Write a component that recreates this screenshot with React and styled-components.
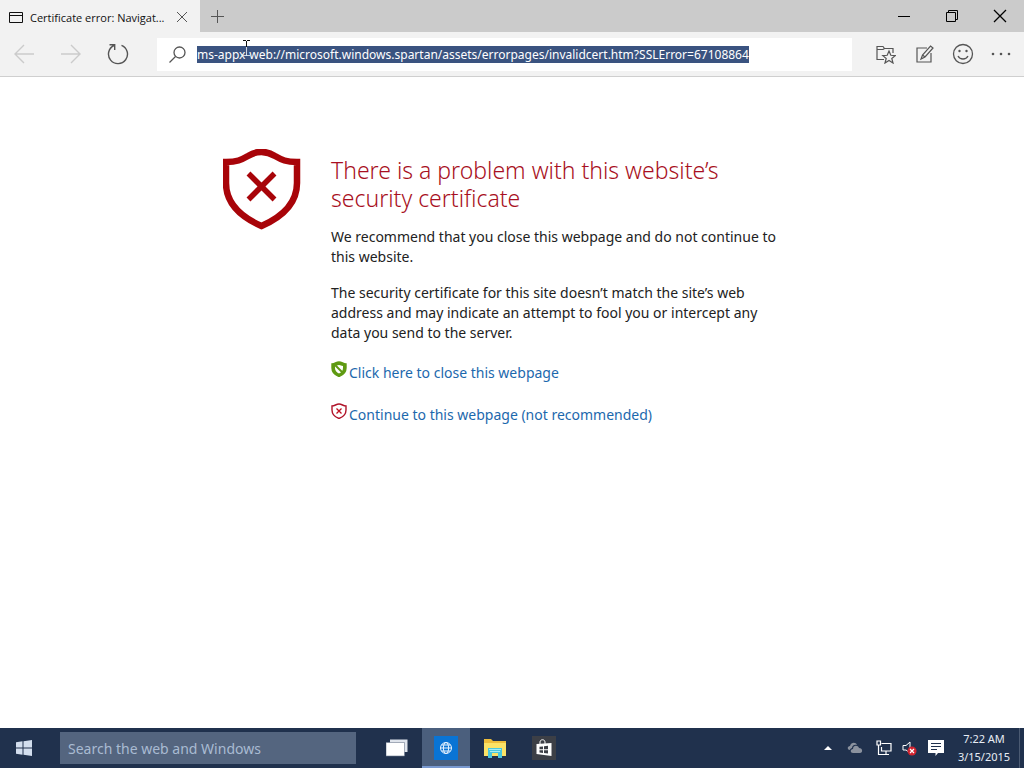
import React, { useEffect, useRef } from "react";
import styled, { createGlobalStyle } from "styled-components";

const Global = createGlobalStyle`
  * { box-sizing: border-box; }
  body { margin: 0; background: #fff; font-family: "Noto Sans", "Open Sans", sans-serif; }
  button { border: 0; padding: 0; background: none; font: inherit; color: inherit; }
  svg { display: block; flex: none; }
`;

const Desktop = styled.div`
  min-height: 100vh;
  display: flex;
  flex-direction: column;
`;

const TitleBar = styled.header`
  display: flex;
  height: 32px;
  background: #cbcbcb;
`;
const Tab = styled.div`
  width: 200px;
  flex: none;
  display: flex;
  align-items: center;
  padding: 2px 10px 0 8px;
  background: #f2f2f2;
  color: #111;
`;
const TabTitle = styled.span`
  flex: 1;
  margin-left: 7px;
  white-space: nowrap;
  font-family: "Open Sans", "Noto Sans", sans-serif;
  font-size: 11px;
`;
const IconButton = styled.button`
  flex: none;
  display: grid;
  place-items: center;
  width: ${(p) => p.$w}px;
  height: ${(p) => p.$h}px;
  color: ${(p) => p.$color || "#555"};
`;
const Spacer = styled.div`
  flex: 1;
`;

const Toolbar = styled.nav`
  display: flex;
  align-items: center;
  height: 45px;
  background: #f2f2f2;
  border-bottom: 1px solid #cfcfcf;
  padding-right: 4px;
`;
const AddressBar = styled.label`
  position: relative;
  flex: 1;
  min-width: 0;
  display: flex;
  align-items: center;
  height: 33px;
  margin: 0 15px 0 16px;
  padding-left: 12px;
  background: #fff;
  color: #555;
`;
const AddressInput = styled.input`
  flex: 1;
  min-width: 0;
  margin-left: 11px;
  padding: 0;
  border: 0;
  outline: 0;
  background: none;
  color: #111;
  caret-color: transparent;
  font-family: inherit;
  font-size: 12px;
  line-height: 17px;
  &::selection { background: #3a5380; color: #fff; }
`;
const TextCursor = styled.svg`
  position: absolute;
  left: 85px;
  top: 2px;
`;

const Page = styled.main`
  flex: 1;
  padding: 72px 24px 40px;
`;
const Notice = styled.section`
  display: flex;
  gap: 30px;
  max-width: 578px;
  margin: 0 auto;
`;
const Message = styled.div`
  padding-top: 7px;
  color: #222;
  font-size: 14px;
  line-height: 20px;
  white-space: nowrap;
`;
const Heading = styled.h1`
  margin: 0 0 15px;
  color: #a80f22;
  font-weight: 300;
  font-size: 23px;
  line-height: 28px;
`;
const Paragraph = styled.p`
  margin: 0 0 16px;
`;
const Action = styled.a`
  display: flex;
  align-items: flex-start;
  gap: 2px;
  width: max-content;
  margin-top: ${(p) => p.$gap}px;
  color: #1c68ad;
  text-decoration: none;
`;
const ActionIcon = styled.svg`
  margin-top: -2px;
`;

const Taskbar = styled.footer`
  display: flex;
  align-items: center;
  height: 40px;
  background: #20314d;
  color: #e8edf5;
`;
const TaskSearch = styled.input`
  width: 296px;
  height: 32px;
  margin: 0 17px 0 12px;
  padding: 0 8px;
  border: 0;
  outline: 0;
  background: #54657f;
  font-family: inherit;
  font-size: 14px;
  color: #fff;
  &::placeholder { color: #a9bbd2; opacity: 1; }
`;
const TaskButton = styled.button`
  flex: none;
  display: grid;
  place-items: center;
  width: 48px;
  height: 40px;
  margin-right: 1px;
  background: ${(p) => (p.$active ? "#4b5f7d" : "none")};
  box-shadow: ${(p) => (p.$active ? "inset 0 -2px #7898cf" : "none")};
`;
const Clock = styled.time`
  width: 62px;
  margin-left: 2px;
  text-align: center;
  font-size: 11px;
  line-height: 18px;
  white-space: nowrap;
`;
const ShowDesktop = styled.button`
  width: 5px;
  height: 40px;
  margin-left: 4px;
  border-left: 1px solid #4b5a72;
`;

const URL_TEXT =
  "ms-appx-web://microsoft.windows.spartan/assets/errorpages/invalidcert.htm?SSLError=67108864";

const Stroke = ({ w, h, sw = 1, children }) => (
  <svg width={w} height={h} viewBox={`0 0 ${w} ${h}`} fill="none" stroke="currentColor" strokeWidth={sw} aria-hidden="true">
    {children}
  </svg>
);

const WarningShield = () => (
  <svg width="78" height="82" viewBox="0 0 78 82" fill="none" stroke="#a80409" aria-hidden="true">
    <path d="M3 13C14 13 18 11 25 7C34 1.500 43 1.500 52 7C59 11 63 13 74 13V34C74 54 59 68 38.500 77C18 68 3 54 3 34Z" strokeWidth="6.500" />
    <path d="M25.500 24.500L51.500 50.500M51.500 24.500L25.500 50.500" strokeWidth="5.500" />
  </svg>
);

const SmallShield = ({ safe }) => (
  <ActionIcon width="16" height="16" viewBox="0 0 16 16" aria-hidden="true">
    <path
      d="M1 3C4 3 5 1 8 1S12 3 15 3V7C15 11 12 14 8 15.500C4 14 1 11 1 7Z"
      fill={safe ? "#5f9a12" : "#fff"}
      stroke={safe ? "#5f9a12" : "#b0142a"}
      strokeWidth="1.400"
    />
    {safe ? (
      <>
        <path d="M4 5C6 5 6 4 8 4S10 5 12 5V7C12 10 10 11.500 8 12.500C6 11.500 4 10 4 7Z" fill="#fff" />
        <path d="M4 4L12 12" stroke="#5f9a12" strokeWidth="2" />
      </>
    ) : (
      <path d="M5.500 5.500L10.500 10.500M10.500 5.500L5.500 10.500" stroke="#c01020" strokeWidth="1.300" />
    )}
  </ActionIcon>
);

export default function App() {
  const address = useRef(null);
  useEffect(() => {
    address.current.focus();
    address.current.select();
    address.current.scrollLeft = 0;
  }, []);

  return (
    <Desktop>
      <Global />
      <TitleBar>
        <Tab>
          <Stroke w={15} h={13}><path d="M1.500 1.500H14.500V11.500H1.500ZM1.500 4.500H14.500" /></Stroke>
          <TabTitle>Certificate error: Navigat...</TabTitle>
          <IconButton $w={16} $h={16} aria-label="Close tab">
            <Stroke w={12} h={12}><path d="M1 1L11 11M11 1L1 11" /></Stroke>
          </IconButton>
        </Tab>
        <IconButton $w={34} $h={32} aria-label="New tab">
          <Stroke w={13} h={13}><path d="M6.500 0V13M0 6.500H13" /></Stroke>
        </IconButton>
        <Spacer />
        <IconButton $w={48} $h={32} $color="#000" aria-label="Minimize">
          <Stroke w={12} h={12}><path d="M0 6.500H12" /></Stroke>
        </IconButton>
        <IconButton $w={48} $h={32} $color="#000" aria-label="Restore">
          <Stroke w={12} h={12}><path d="M.5 2.500H9.500V11.500H.5ZM2.500 2.500V.5H11.500V9.500H9.500" /></Stroke>
        </IconButton>
        <IconButton $w={48} $h={32} $color="#000" aria-label="Close">
          <Stroke w={14} h={14} sw={1.3}><path d="M1 1L13 13M13 1L1 13" /></Stroke>
        </IconButton>
      </TitleBar>

      <Toolbar>
        <IconButton $w={47} $h={44} $color="#cbcbcb" aria-label="Back">
          <Stroke w={20} h={20} sw={1.4}><path d="M20 10H1M10 1L1 10L10 19" /></Stroke>
        </IconButton>
        <IconButton $w={47} $h={44} $color="#cbcbcb" aria-label="Forward">
          <Stroke w={20} h={20} sw={1.4}><path d="M0 10H19M10 1L19 10L10 19" /></Stroke>
        </IconButton>
        <IconButton $w={47} $h={44} aria-label="Refresh">
          <Stroke w={22} h={22} sw={1.4}><path d="M14.500 2.300A9.500 9.500 0 1 1 7 2.500M2.500 1.700H7.700V7" /></Stroke>
        </IconButton>
        <AddressBar>
          <Stroke w={17} h={17} sw={1.3}><circle cx="10.500" cy="6.500" r="5.500" /><path d="M6.500 10.500L.5 16.500" /></Stroke>
          <AddressInput ref={address} defaultValue={URL_TEXT} aria-label="Address" spellCheck={false} />
          <TextCursor width="9" height="16" viewBox="0 0 9 16" fill="none" aria-hidden="true">
            <path d="M1 .5H4M5 .5H8M4.500 1V7" stroke="#111" />
            <path d="M4.500 7V15M1 15.500H4M5 15.500H8" stroke="#cfd8e4" />
          </TextCursor>
        </AddressBar>
        <IconButton $w={38} $h={44} aria-label="Favorites">
          <Stroke w={20} h={19} sw={1.2}>
            <path d="M8 14.500H1V1.500H7L8.500 3.500H17V8M1 4.500H7L8.500 3.500" />
            <path d="M13 6L14.800 10.300L19.200 10.600L15.800 13.500L17 18L13 15.500L9 18L10.200 13.500L6.800 10.600L11.200 10.300Z" fill="#f2f2f2" />
          </Stroke>
        </IconButton>
        <IconButton $w={39} $h={44} aria-label="Make a web note">
          <Stroke w={18} h={18} sw={1.2}>
            <path d="M11 3H1V17H15V8" />
            <path d="M14.500 1L17 3L9 12L5 14L6.500 10ZM6.500 10L9 12" />
          </Stroke>
        </IconButton>
        <IconButton $w={38} $h={44} aria-label="Send feedback">
          <Stroke w={22} h={22} sw={1.3}>
            <circle cx="11" cy="11" r="9.500" />
            <path d="M6 13C8 17 14 17 16 13" />
            <circle cx="7.500" cy="8" r="1.200" fill="currentColor" stroke="none" />
            <circle cx="14.500" cy="8" r="1.200" fill="currentColor" stroke="none" />
          </Stroke>
        </IconButton>
        <IconButton $w={38} $h={44} aria-label="More">
          <svg width="20" height="4" viewBox="0 0 20 4" fill="currentColor"><circle cx="2" cy="2" r="1.300" /><circle cx="10" cy="2" r="1.300" /><circle cx="18" cy="2" r="1.300" /></svg>
        </IconButton>
      </Toolbar>

      <Page>
        <Notice>
          <WarningShield />
          <Message>
            <Heading>There is a problem with this website’s<br />security certificate</Heading>
            <Paragraph>We recommend that you close this webpage and do not continue to<br />this website.</Paragraph>
            <Paragraph>The security certificate for this site doesn’t match the site’s web<br />address and may indicate an attempt to fool you or intercept any<br />data you send to the server.</Paragraph>
            <Action href="#close" $gap={20}><SmallShield safe />Click here to close this webpage</Action>
            <Action href="#continue" $gap={22}><SmallShield />Continue to this webpage (not recommended)</Action>
          </Message>
        </Notice>
      </Page>

      <Taskbar>
        <IconButton $w={48} $h={40} $color="#d3deee" aria-label="Start">
          <svg width="16" height="16" viewBox="0 0 16 16" fill="currentColor"><path d="M0 2.300L6.500 1.300V7.500H0ZM7.500 1.200L16 0V7.500H7.500ZM0 8.500H6.500V14.700L0 13.700ZM7.500 8.500H16V16L7.500 14.800Z" /></svg>
        </IconButton>
        <TaskSearch aria-label="Search" placeholder="Search the web and Windows" />
        <TaskButton aria-label="Task view">
          <svg width="22" height="18" viewBox="0 0 22 18"><path d="M4 .5H21.500V13H4Z" fill="#dfe4ec" /><path d="M0 3.500H18.500V17H0Z" fill="#fff" stroke="#6d7a8f" strokeWidth=".6" /></svg>
        </TaskButton>
        <TaskButton $active aria-label="Browser">
          <svg width="24" height="24" viewBox="0 0 24 24" fill="none" stroke="#e9f4ff" strokeWidth="1"><path d="M0 0H24V24H0Z" fill="#0a74d4" stroke="none" /><circle cx="12" cy="12" r="5.500" /><ellipse cx="12" cy="12" rx="2.600" ry="5.500" /><path d="M6.500 12H17.500M7.500 9H16.500M7.500 15H16.500" /></svg>
        </TaskButton>
        <TaskButton aria-label="File Explorer">
          <svg width="22" height="20" viewBox="0 0 22 20"><path d="M0 1H7L9 3H22V18H0Z" fill="#eebd3b" /><path d="M0 5H22V18H0Z" fill="#fbe266" /><path d="M4 10H18V20H14V15H8V20H4Z" fill="#49c7dd" /><path d="M5 11.500H17M6 13.500H16" stroke="#a3edf4" /></svg>
        </TaskButton>
        <TaskButton aria-label="Store">
          <svg width="24" height="24" viewBox="0 0 24 24"><path d="M0 0H24V24H0Z" fill="#3c3f46" /><path d="M4.500 8L19.500 7V20L4.500 18Z" fill="#fff" /><path d="M8 8V6C8 3 13 3 13 6V8" fill="none" stroke="#fff" /><path d="M7.500 10.800L11 10.400V13.200H7.500ZM12 10.300L16 9.800V13.200H12ZM7.500 14.200H11V17L7.500 16.500ZM12 14.200H16V17.600L12 17.100Z" fill="#3c3f46" /></svg>
        </TaskButton>
        <Spacer />
        <IconButton $w={26} $h={40} $color="#fff" aria-label="Show hidden icons">
          <svg width="8" height="4" viewBox="0 0 8 4" fill="currentColor"><path d="M0 4L4 0L8 4Z" /></svg>
        </IconButton>
        <IconButton $w={28} $h={40} $color="#8b929e" aria-label="OneDrive">
          <svg width="16" height="12" viewBox="0 0 16 12" fill="currentColor"><path d="M3 8C0 8 0 4 3 4C4 0 9 0 10 3C7 2 5 4 5 6C4 6 3 7 3 8Z" /><path d="M6 11C3 11 3 7 6 7C6 3 11 3 12 6C16 6 16 11 13 11Z" /></svg>
        </IconButton>
        <IconButton $w={30} $h={40} $color="#fff" aria-label="Network">
          <Stroke w={16} h={16} sw={1.2}><path d="M5.500 3.500H15V11H5.500V7M10 11V14M7 14.500H13M1 1H4.500V5H1ZM2.500 5V14.500H7" /></Stroke>
        </IconButton>
        <IconButton $w={22} $h={40} $color="#fff" aria-label="Volume muted">
          <svg width="16" height="16" viewBox="0 0 16 16"><path d="M1 5.500H4L8 2V13L4 10H1Z" fill="none" stroke="currentColor" /><circle cx="10" cy="11" r="4.500" fill="#d2232f" /><path d="M8 9L12 13M12 9L8 13" stroke="#fff" strokeWidth="1.200" /></svg>
        </IconButton>
        <IconButton $w={30} $h={40} $color="#fff" aria-label="Notifications">
          <svg width="16" height="16" viewBox="0 0 16 16"><path d="M0 0H16V13H10L7.500 16V13H0Z" fill="currentColor" /><path d="M3 3.500H13M3 6.500H13M3 9.500H9" stroke="#20314d" /></svg>
        </IconButton>
        <Clock>7:22 AM<br />3/15/2015</Clock>
        <ShowDesktop aria-label="Show desktop" />
      </Taskbar>
    </Desktop>
  );
}
